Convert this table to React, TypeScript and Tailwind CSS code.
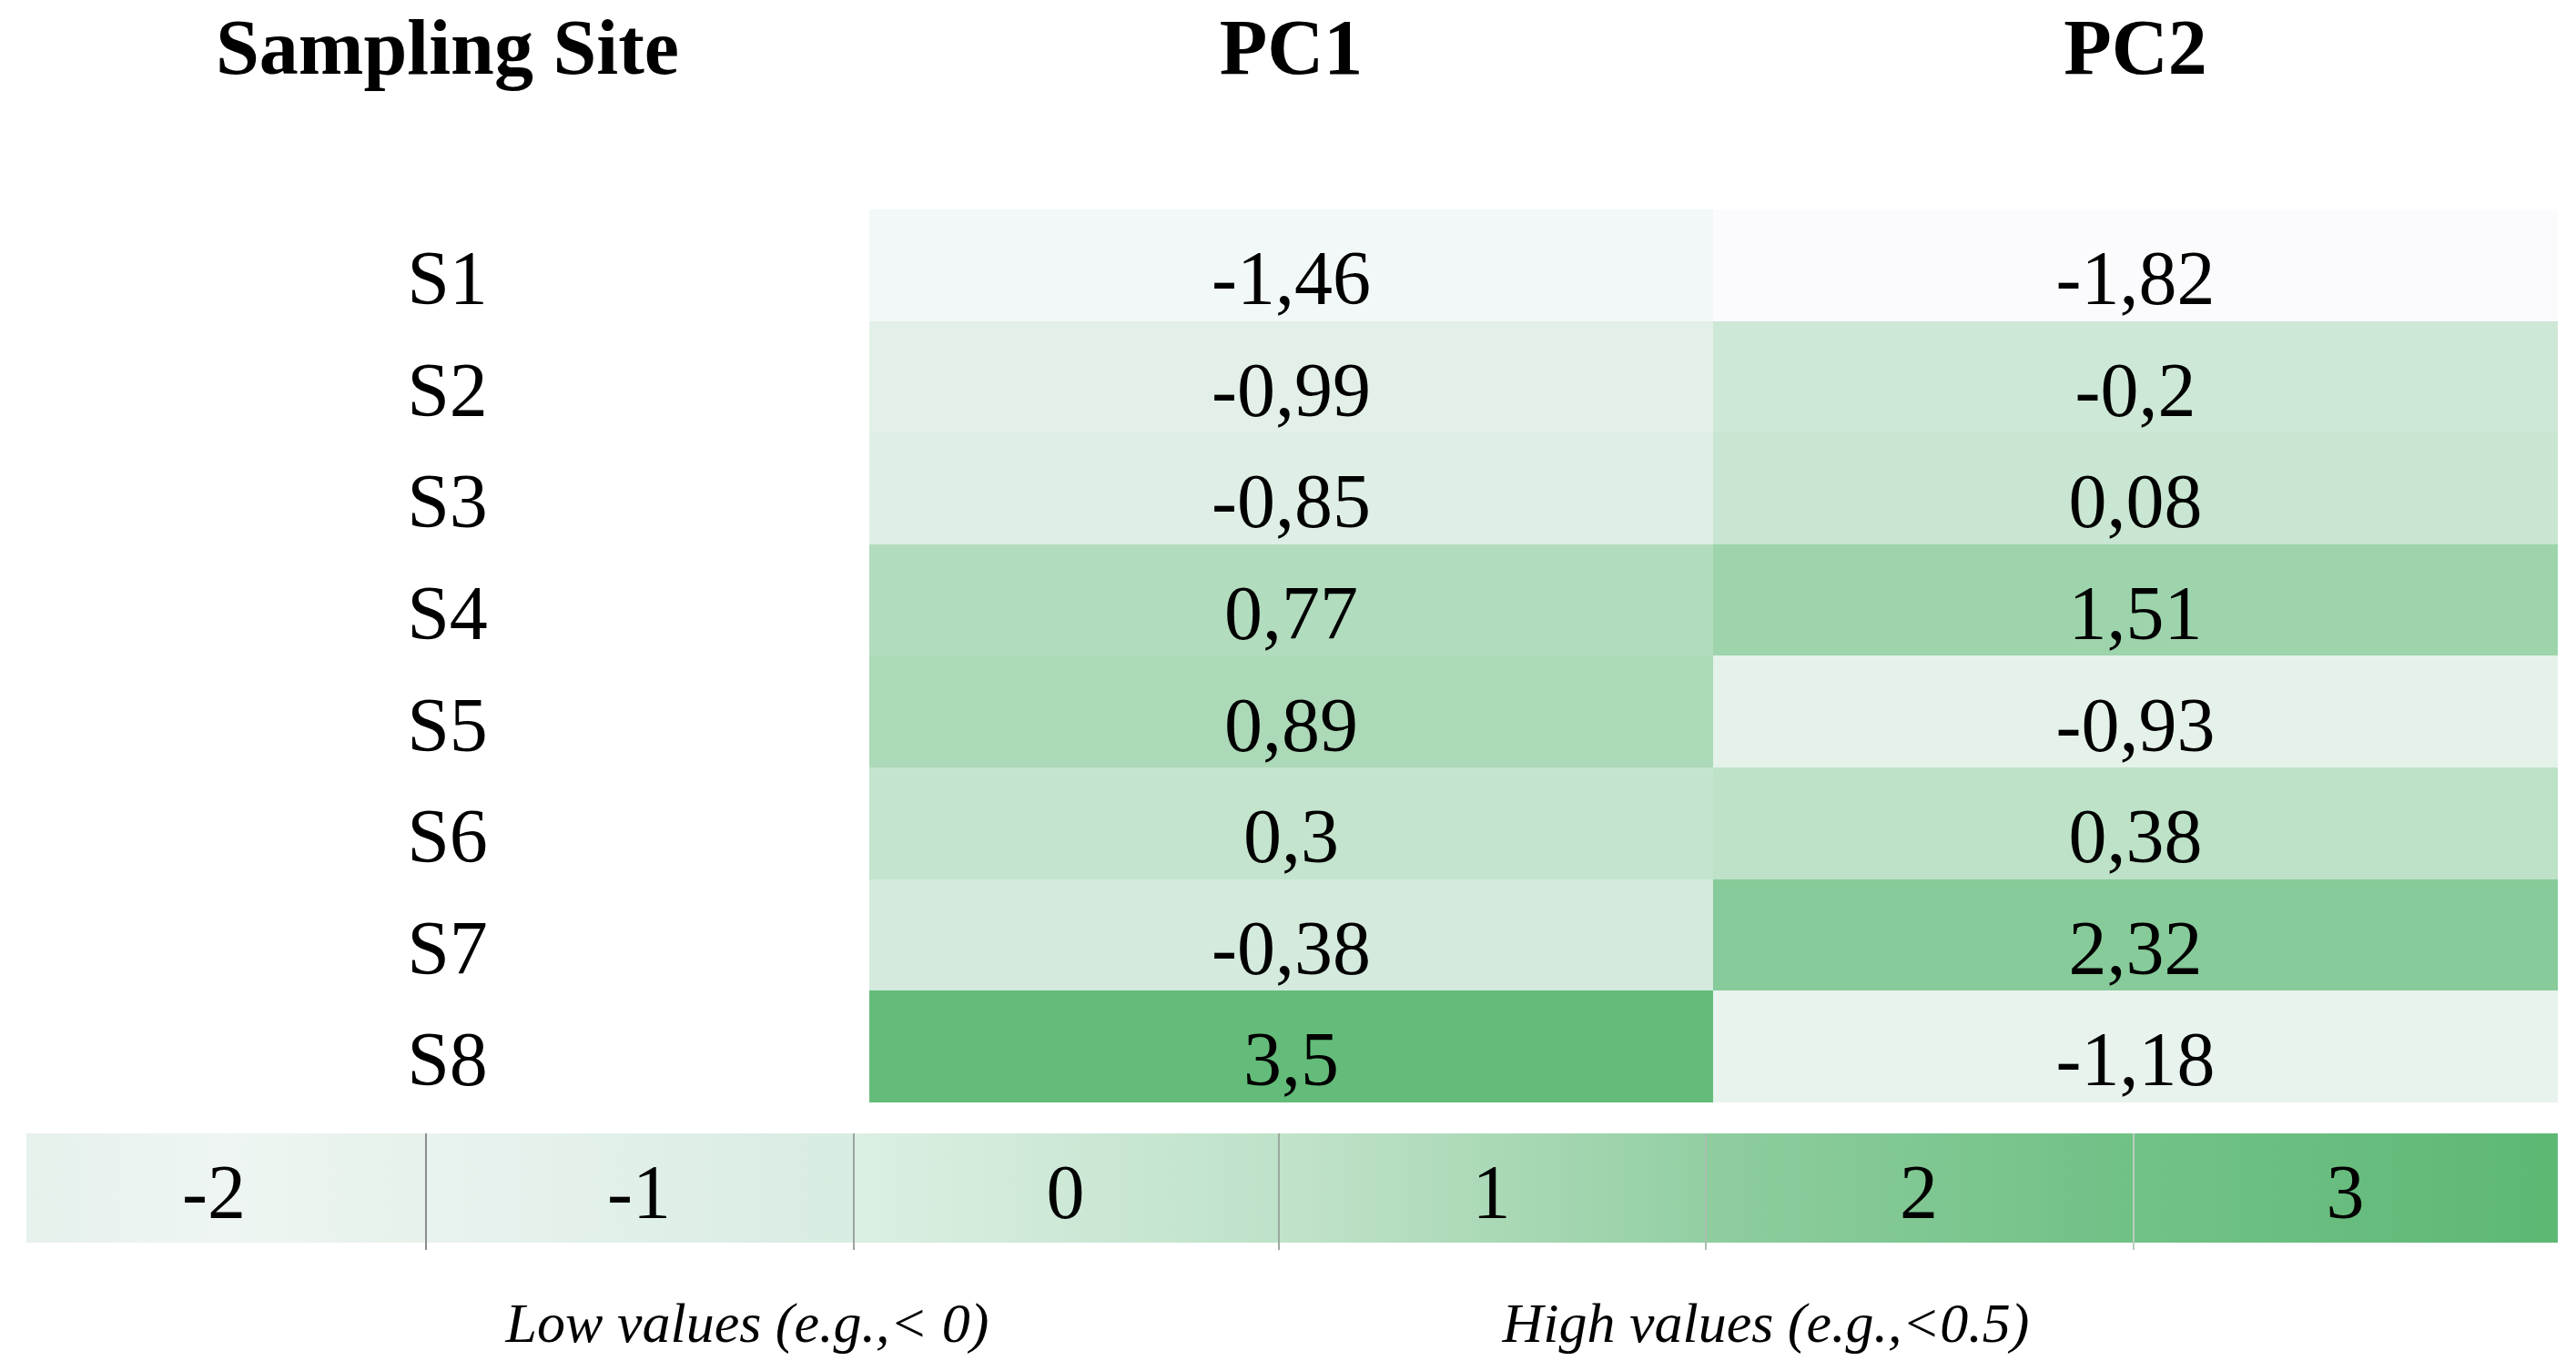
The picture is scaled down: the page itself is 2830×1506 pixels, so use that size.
import React from "react";

const rows: { s: string; a: string; ac: string; b: string; bc: string }[] = [
  { s: "S1", a: "-1,46", ac: "bg-[#f2f7f7]", b: "-1,82", bc: "bg-[#fbfbfd]" },
  { s: "S2", a: "-0,99", ac: "bg-[#e2f0e7]", b: "-0,2", bc: "bg-[#cde8d6]" },
  { s: "S3", a: "-0,85", ac: "bg-[#dfefe5]", b: "0,08", bc: "bg-[#c8e6d1]" },
  { s: "S4", a: "0,77", ac: "bg-[#b2dcbe]", b: "1,51", bc: "bg-[#9dd4ac]" },
  { s: "S5", a: "0,89", ac: "bg-[#acd9b8]", b: "-0,93", bc: "bg-[#e5f2ea]" },
  { s: "S6", a: "0,3", ac: "bg-[#c4e4cd]", b: "0,38", bc: "bg-[#bde2c8]" },
  { s: "S7", a: "-0,38", ac: "bg-[#d3eadc]", b: "2,32", bc: "bg-[#86cb99]" },
  { s: "S8", a: "3,5", ac: "bg-[#63bc79]", b: "-1,18", bc: "bg-[#e8f3ed]" },
];

const segs: { label: string; cls: string; w: string; line: string; pad: string }[] = [
  { label: "-2", cls: "bg-gradient-to-r from-[#e6f1ec] via-[#eef5f2] to-[#e6f2ea]", w: "w-[438px]", line: "", pad: "pr-[26px]" },
  { label: "-1", cls: "bg-gradient-to-r from-[#e9f3ef] to-[#d8ece1]", w: "w-[470px]", line: "bg-[#8a8f8c]", pad: "" },
  { label: "0", cls: "bg-gradient-to-r from-[#dcefe3] to-[#bee2c9]", w: "w-[467px]", line: "bg-[#9aa39d]", pad: "" },
  { label: "1", cls: "bg-gradient-to-r from-[#c2e3cb] to-[#93cfa3]", w: "w-[469px]", line: "bg-[#9aa89e]", pad: "" },
  { label: "2", cls: "bg-gradient-to-r from-[#8fcd9f] to-[#70c186]", w: "w-[470px]", line: "bg-[#a9bfae]", pad: "" },
  { label: "3", cls: "bg-gradient-to-r from-[#72c288] to-[#5db874]", w: "w-[467px]", line: "bg-[#b9cfbd]", pad: "" },
];

export default function App() {
  return (
    <div className="w-[2830px] h-[1506px] bg-white text-black font-['Liberation_Serif',serif] overflow-hidden">
      {/* Header */}
      <div className="grid grid-cols-[955px_927px_928px] h-[230px] font-bold text-[86px] leading-none">
        <div className="pt-[9px] pl-[28px] text-center">Sampling Site</div>
        <div className="pt-[9px] text-center">PC1</div>
        <div className="pt-[9px] text-center">PC2</div>
      </div>

      {/* Rows */}
      <div className="flex flex-col text-[84px] leading-none">
        {rows.map((r) => (
          <div key={r.s} className="grid grid-cols-[955px_927px_928px] h-[122.6px]">
            <div className="flex items-center justify-center pl-[28px] pt-[30px]">{r.s}</div>
            <div className={`flex items-center justify-center pt-[30px] ${r.ac}`}>{r.a}</div>
            <div className={`flex items-center justify-center pt-[30px] ${r.bc}`}>{r.b}</div>
          </div>
        ))}
      </div>

      {/* Legend bar */}
      <div className="flex ml-[29px] mt-[34px] text-[84px] leading-none">
        {segs.map((s) => (
          <div key={s.label} className={`relative h-[120px] ${s.w} ${s.cls} ${s.pad} flex items-center justify-center pt-[10px]`}>
            {s.line && <div className={`absolute left-0 top-0 w-[2px] h-[128px] ${s.line}`} />}
            {s.label}
          </div>
        ))}
      </div>

      {/* Legend captions */}
      <div className="grid grid-cols-[1642px_596px] mt-[57px] text-[62px] leading-none italic">
        <div className="text-center">Low values (e.g.,&lt; 0)</div>
        <div className="text-center">High values (e.g.,&lt;0.5)</div>
      </div>
    </div>
  );
}
